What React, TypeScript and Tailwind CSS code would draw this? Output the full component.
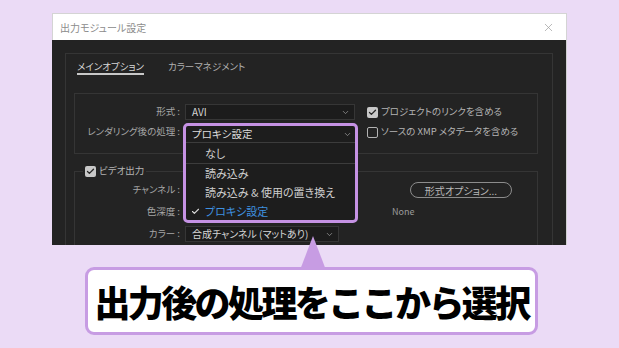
import { X, ChevronDown, Check } from "lucide-react";

const Dropdown = ({ value, width }: { value: string; width: string }) => (
  <div
    className={`${width} h-[16px] flex items-center justify-between bg-[#1c1c1c] border border-[#363636] pl-[6px] pr-[4px] text-[10px] text-[#d6d6d6]`}
  >
    <span className="leading-none">{value}</span>
    <ChevronDown size={9} strokeWidth={2} className="text-[#9a9a9a]" />
  </div>
);

// placeholder for a select that is covered by the open list
const Hidden = () => <div className="w-[170px] h-[16px] bg-[#1c1c1c] border border-[#363636]" />;

const Checkbox = ({ checked, label }: { checked: boolean; label?: string }) => (
  <div className="flex items-center gap-[3px]">
    {checked ? (
      <div className="w-[11px] h-[11px] rounded-[2px] bg-[#c8c8c8] flex items-center justify-center">
        <Check size={9} strokeWidth={3.5} className="text-[#262626]" />
      </div>
    ) : (
      <div className="w-[11px] h-[11px] rounded-[2px] border-[1.5px] border-[#b3b3b3]" />
    )}
    {label && <span className="text-[9.5px] text-[#b4b4b4] leading-none">{label}</span>}
  </div>
);

const Label = ({ text }: { text: string }) => (
  <div className="w-[105px] text-right text-[9.5px] text-[#a6a6a6] leading-none">{text}</div>
);

const App = () => {
  return (
    <div className="relative w-[619px] h-[348px] overflow-hidden bg-[#ebdbf6] font-['Noto_Sans_CJK_JP',sans-serif] [font-feature-settings:'palt']">
      {/* dialog window */}
      <div className="ml-[52px] pt-[13px] w-[515px]">
        <div className="h-[27px] bg-white border-t border-x border-[#d4d4d4] flex items-center justify-between pl-[7px] pr-[11px]">
          <span className="text-[10px] text-[#8c8c8c]">出力モジュール設定</span>
          <X size={13} strokeWidth={1.3} className="text-[#9c9c9c]" />
        </div>

        <div className="h-[205px] bg-[#232323] border-r border-[#d0d0d0] pl-[13px] pr-[13px] pt-[13px] overflow-hidden">
          <div className="h-[230px] border border-[#353535] pt-[5px]">
            {/* tabs */}
            <div className="h-[18px] flex items-start gap-[24px] pl-[11px] text-[9.5px]">
              <span className="text-[#d8d8d8] leading-[14px] border-b-2 border-[#c8c8c8]">メインオプション</span>
              <span className="text-[#b0b0b0] leading-[14px]">カラーマネジメント</span>
            </div>

            {/* group 1 */}
            <div className="mt-[16px] ml-[8px] w-[464px] h-[61px] border border-[#353535] pt-[10px] flex flex-col gap-[4px]">
              <div className="flex items-center">
                <Label text="形式 :" />
                <div className="ml-[5px]">
                  <Dropdown value="AVI" width="w-[170px]" />
                </div>
                <div className="ml-[12px]">
                  <Checkbox checked label="プロジェクトのリンクを含める" />
                </div>
              </div>
              <div className="flex items-center">
                <Label text="レンダリング後の処理 :" />
                <div className="ml-[5px]">
                  <Hidden />
                </div>
                <div className="ml-[12px]">
                  <Checkbox checked={false} label="ソースの XMP メタデータを含める" />
                </div>
              </div>
            </div>

            {/* group 2 */}
            <fieldset className="mt-[11px] ml-[8px] w-[464px] border border-[#353535] pb-[10px]">
              <legend className="ml-[8px] px-[2px] h-[12px] flex items-center">
                <Checkbox checked label="ビデオ出力" />
              </legend>
              <div className="pt-[5px] flex flex-col gap-[6px]">
                <div className="flex items-center">
                  <Label text="チャンネル :" />
                  <div className="ml-[5px]">
                    <Hidden />
                  </div>
                  <div className="ml-[55px] w-[102px] h-[16px] rounded-full border border-[#8c8c8c] flex items-center justify-center text-[10px] text-[#b8b8b8]">
                    形式オプション...
                  </div>
                </div>
                <div className="flex items-center">
                  <Label text="色深度 :" />
                  <div className="ml-[5px]">
                    <Hidden />
                  </div>
                  <span className="ml-[37px] text-[9px] text-[#9c9c9c]">None</span>
                </div>
                <div className="flex items-center">
                  <Label text="カラー :" />
                  <div className="ml-[5px]">
                    <Dropdown value="合成チャンネル (マットあり)" width="w-[154px]" />
                  </div>
                </div>
              </div>
            </fieldset>
          </div>
        </div>
      </div>

      {/* open dropdown list, highlighted */}
      <div className="absolute left-[183px] top-[123px] w-[175px] h-[100px] border-[3px] border-[#c592e4] rounded-[5px] bg-[#1d1d1d] overflow-hidden">
        <div className="h-[16px] flex items-center justify-between pl-[6px] pr-[3px] text-[10.5px] text-[#dcdcdc]">
          <span className="leading-none">プロキシ設定</span>
          <ChevronDown size={9} strokeWidth={2} className="text-[#9a9a9a]" />
        </div>
        <div className="h-px bg-[#3c3c3c]" />
        <div className="h-[20px] flex items-center pl-[19px] text-[11px] text-[#cfcfcf]">なし</div>
        <div className="h-px bg-[#3c3c3c]" />
        <div className="h-[19px] flex items-center pl-[19px] text-[11px] text-[#cfcfcf]">読み込み</div>
        <div className="h-[19px] flex items-center pl-[19px] text-[11px] text-[#cfcfcf]">読み込み & 使用の置き換え</div>
        <div className="h-[18px] flex items-center pl-[5px] text-[11px] text-[#3f92e0]">
          <Check size={9} strokeWidth={3} className="text-[#d8d8d8] mr-[5px]" />
          プロキシ設定
        </div>
      </div>

      {/* callout */}
      <div className="relative mt-[22px] ml-[85px] w-[453px] h-[68px] rounded-[9px] border-[3px] border-[#c79ce3] bg-white flex items-center justify-center">
        <svg
          className="absolute left-[210px] top-[-34px]"
          width="30"
          height="34"
          viewBox="0 0 30 34"
        >
          <polygon points="15,0 2,34 28,34" fill="#c79ce3" />
        </svg>
        <span className="text-[36px] font-black text-black leading-none tracking-[-2.6px] [font-feature-settings:normal]">
          出力後の処理をここから選択
        </span>
      </div>
    </div>
  );
};

export default App;
